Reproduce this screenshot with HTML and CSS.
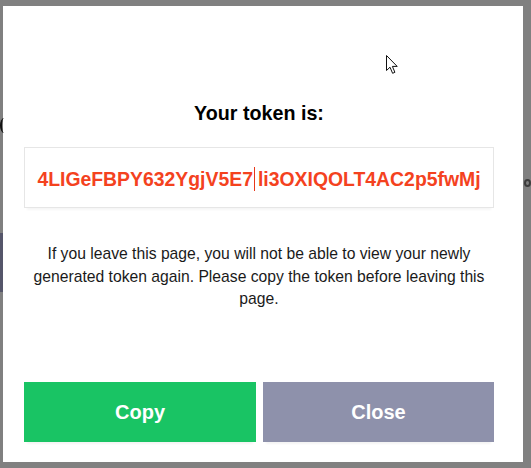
FILE: index.html
```html
<!DOCTYPE html>
<html lang="en">
<head>
<meta charset="utf-8">
<title>Your token</title>
<link rel="stylesheet" href="styles.css">
</head>
<body>
<div class="backdrop">
  <span class="bg-arc"></span>
  <span class="bg-block"></span>
  <span class="bg-ring"></span>
  <div class="modal">
    <h2 class="title">Your token is:</h2>
    <div class="token-box">
      <span class="token">4LIGeFBPY632YgjV5E7<span class="caret"></span>li3OXIQOLT4AC2p5fwMj</span>
    </div>
    <p class="warning">If you leave this page, you will not be able to view your newly generated token again. Please copy the token before leaving this page.</p>
    <div class="actions">
      <button class="btn btn-copy">Copy</button>
      <button class="btn btn-close">Close</button>
    </div>
  </div>
  <svg class="pointer" width="13" height="20" viewBox="0 0 13 20">
    <path d="M0.5 0.5 L0.5 15.5 L4 12.2 L6.6 18.3 L8.9 17.3 L6.4 11.4 L11.2 11.4 Z" fill="#fff" stroke="#111" stroke-width="1" stroke-linejoin="miter"/>
  </svg>
</div>
</body>
</html>
```

FILE: styles.css
```css
html, body {
  margin: 0;
  padding: 0;
  background: #808080;
  font-family: "Liberation Sans", Arial, sans-serif;
}

.backdrop {
  position: relative;
  width: 531px;
  height: 468px;
  padding: 6px 8px 6px 3px;
  box-sizing: border-box;
  overflow: hidden;
}

.bg-arc {
  position: absolute;
  left: 0;
  top: 118px;
  width: 8px;
  height: 15px;
  border-left: 2px solid #111;
  border-radius: 50% 0 0 50%;
  box-sizing: border-box;
  z-index: 2;
}

.bg-ring {
  position: absolute;
  left: 524px;
  top: 179px;
  width: 7px;
  height: 8px;
  border: 2px solid #3c3c3c;
  border-radius: 50%;
  box-sizing: border-box;
}

.bg-block {
  position: absolute;
  left: 0;
  top: 233px;
  width: 3px;
  height: 59px;
  background: #55566a;
}

.modal {
  position: relative;
  background: #fff;
  width: 520px;
  height: 456px;
  box-sizing: border-box;
  padding: 96px 29px 20px 21px;
  display: flex;
  flex-direction: column;
  align-items: stretch;
}

.title {
  margin: 0;
  font-size: 19.7px;
  line-height: 22px;
  font-weight: bold;
  text-align: center;
  color: #000;
}

.token-box {
  margin-top: 23px;
  height: 61px;
  box-sizing: border-box;
  border: 1px solid #e6e6e6;
  box-shadow: 0 5px 2px -3px #f6f6f6;
  display: flex;
  align-items: center;
  justify-content: center;
  padding-top: 2px;
}

.token {
  font-size: 19.4px;
  line-height: 22px;
  font-weight: bold;
  color: #f4421e;
  white-space: nowrap;
  display: inline-flex;
  align-items: center;
}

.caret {
  display: inline-block;
  width: 1px;
  height: 24px;
  background: #e8381a;
  margin: 0 3px 0 1px;
}

.warning {
  margin: 35px 0 0;
  font-size: 15.7px;
  line-height: 22.5px;
  text-align: center;
  color: #1a1a1a;
}

.actions {
  margin-top: auto;
  display: grid;
  grid-template-columns: 232px 231px;
  column-gap: 7px;
}

.btn {
  height: 60px;
  border: 0;
  border-radius: 0;
  font-family: "Liberation Sans", Arial, sans-serif;
  font-size: 20px;
  font-weight: bold;
  color: #fff;
  padding: 0;
  box-shadow: 0 5px 2px -3px #f4f4f4;
}

.btn-copy {
  background: #19c464;
}

.btn-close {
  background: #8e91ab;
}

.pointer {
  position: absolute;
  left: 386px;
  top: 55px;
}
```
